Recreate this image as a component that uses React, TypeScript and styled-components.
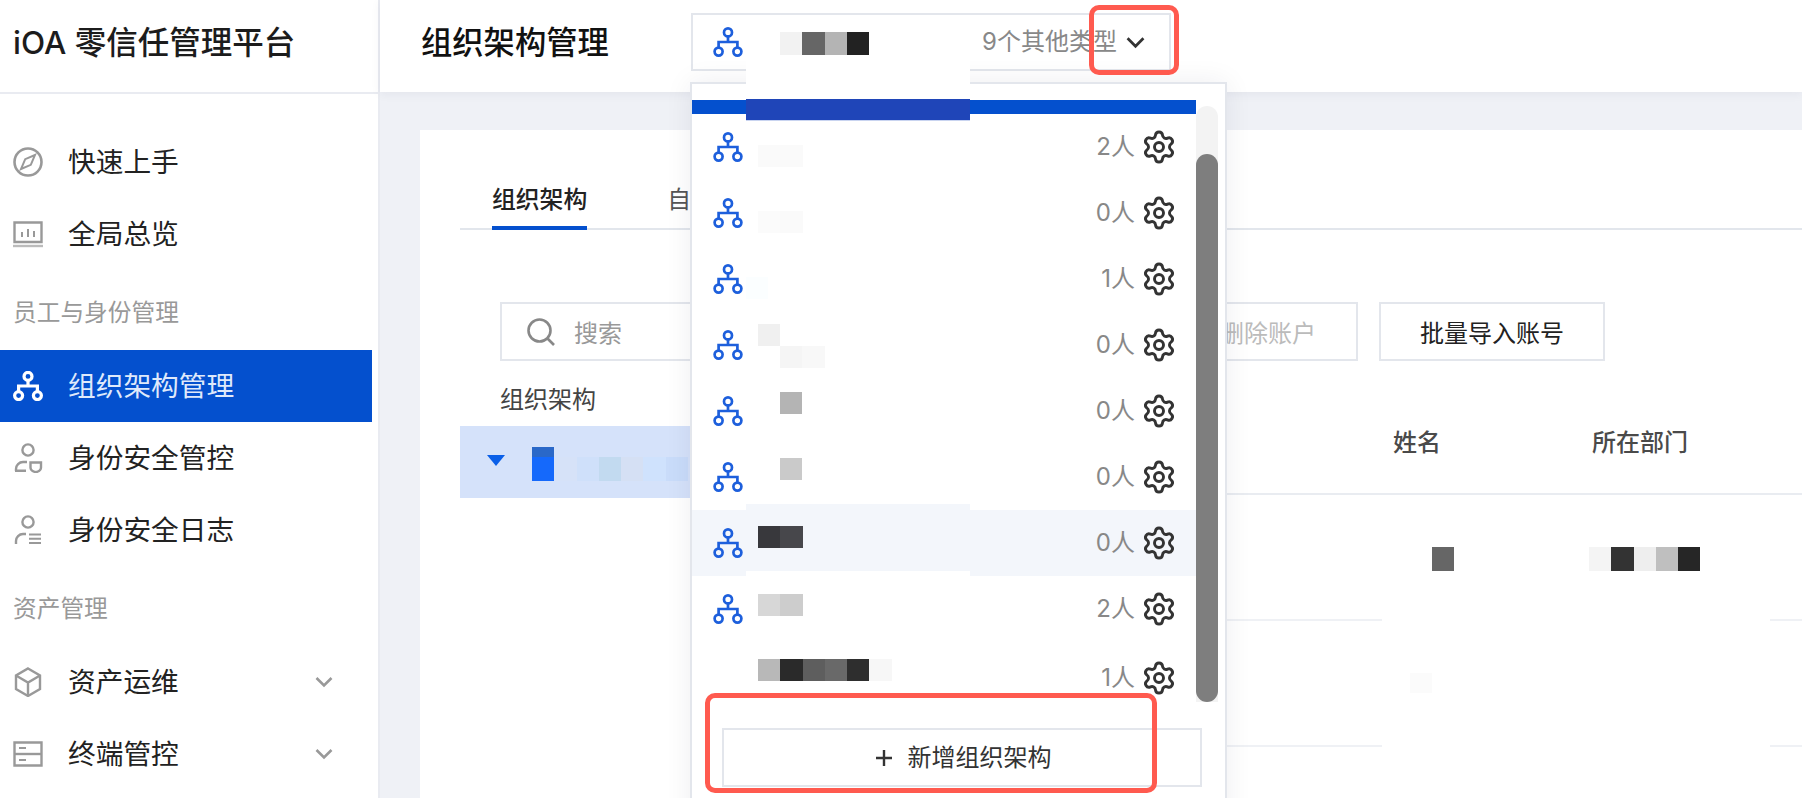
import * as React from 'react';
import styled, { createGlobalStyle } from 'styled-components';
import { Settings } from 'lucide-react';

const GlobalStyle = createGlobalStyle`
	html, body {
		margin: 0;
		padding: 0;
		background: #fff;
	}
	* {
		box-sizing: border-box;
	}
	body {
		font-family: Inter, 'Noto Sans CJK SC', sans-serif;
		color: #222;
	}
`;

const Page = styled.div`
	position: relative;
	display: flex;
	width: 1802px;
	height: 798px;
	overflow: hidden;
`;

/* ---------- sidebar ---------- */

const Sidebar = styled.aside`
	flex: 0 0 380px;
	border-right: 2px solid #e9ebf1;
	background: #fff;
`;

const Logo = styled.div`
	display: flex;
	align-items: center;
	height: 94px;
	padding: 0 0 6px 13px;
	border-bottom: 2px solid #e9ebf1;
	font-size: 31.5px;
	font-weight: 500;
	line-height: 40px;
	color: #1c1c1c;
	white-space: nowrap;
`;

const Nav = styled.nav`
	padding-top: 32px;
`;

const NavItem = styled.div<{ $active?: boolean }>`
	display: flex;
	align-items: center;
	gap: 25px;
	width: 372px;
	height: 72px;
	padding: 0 39px 0 13px;
	font-size: 27.7px;
	line-height: 36px;
	background: ${(p) => (p.$active ? '#0450ce' : 'transparent')};
	color: ${(p) => (p.$active ? '#dfe9fb' : '#222')};

	svg {
		flex: none;
	}
`;

const NavLabel = styled.span`
	flex: 1;
`;

const NavGroup = styled.div`
	height: 80px;
	padding: 27px 0 0 13px;
	font-size: 23.7px;
	line-height: 32px;
	color: #999;
`;

/* ---------- main ---------- */

const Main = styled.div`
	flex: 1;
	display: flex;
	flex-direction: column;
	min-width: 0;
`;

const Header = styled.header`
	position: relative;
	z-index: 2;
	display: flex;
	flex: 0 0 92px;
	padding-left: 41px;
	background: #fff;
	box-shadow: 0 2px 10px rgba(30, 40, 70, 0.06);
`;

const Title = styled.h1`
	width: 270px;
	margin: 0;
	font-size: 31.3px;
	font-weight: 500;
	line-height: 86px;
	color: #111;
`;

const Trigger = styled.div`
	display: flex;
	align-items: center;
	width: 480px;
	height: 58px;
	margin-top: 13px;
	padding: 0 24px 0 20px;
	border: 2px solid #e3e6ec;
`;

const TriggerHint = styled.span`
	margin: 0 9px 0 auto;
	font-size: 24px;
	line-height: 32px;
	color: #888;
`;

const Content = styled.div`
	flex: 1;
	display: flex;
	padding: 38px 0 0 40px;
	background: #eff1f6;
`;

const Card = styled.section`
	flex: 1;
	min-width: 0;
	background: #fff;
`;

const Tabs = styled.div`
	display: flex;
	align-items: flex-end;
	gap: 80px;
	height: 100px;
	margin-left: 40px;
	padding-left: 32px;
	border-bottom: 2px solid #e2e6ec;
`;

const Tab = styled.div<{ $active?: boolean }>`
	position: relative;
	height: 50px;
	margin-bottom: -2px;
	font-size: 23.8px;
	font-weight: ${(p) => (p.$active ? 500 : 400)};
	line-height: 40px;
	color: ${(p) => (p.$active ? '#222' : '#555')};
	border-bottom: 4px solid ${(p) => (p.$active ? '#0450ce' : 'transparent')};
	white-space: nowrap;
`;

const Toolbar = styled.div`
	display: flex;
	justify-content: space-between;
	width: 1105px;
	margin: 72px 0 0 80px;
`;

const SearchBox = styled.div`
	display: flex;
	align-items: center;
	gap: 19px;
	width: 500px;
	height: 59px;
	padding-left: 25px;
	border: 2px solid #e3e6ec;
	font-size: 24px;
	color: #999;
`;

const ToolButtons = styled.div`
	display: flex;
	gap: 21px;
`;

const ToolButton = styled.div<{ $disabled?: boolean; $w: number }>`
	display: flex;
	align-items: center;
	justify-content: center;
	width: ${(p) => p.$w}px;
	height: 59px;
	border: 2px solid #e3e6ec;
	font-size: 24px;
	color: ${(p) => (p.$disabled ? '#bbb' : '#222')};
`;

const Body = styled.div`
	display: flex;
`;

const TreeColumn = styled.div`
	flex: 0 0 300px;
	margin-left: 40px;
`;

const TreeTitle = styled.div`
	height: 65px;
	padding: 23px 0 0 40px;
	font-size: 24px;
	line-height: 32px;
	color: #444;
`;

const TreeRow = styled.div`
	display: flex;
	align-items: flex-start;
	height: 72px;
	padding: 21px 0 0 27px;
	background: #d5e2fa;
`;

const Caret = styled.span`
	width: 0;
	height: 0;
	margin: 8px 27px 0 0;
	border-style: solid;
	border-width: 11px 9px 0;
	border-color: #0a5fe8 transparent transparent;
`;

const TreeName = styled.div`
	display: flex;
	flex-direction: column;
`;

const Table = styled.div`
	flex: 1;
	margin-top: 32px;
`;

const TableRow = styled.div<{ $head?: boolean; $masked?: boolean }>`
	position: relative;
	display: grid;
	grid-template-columns: 633px 199px 1fr;
	align-items: center;
	height: ${(p) => (p.$head ? '102px' : '126px')};
	border-bottom: 2px solid ${(p) => (p.$head ? '#e9ecf1' : '#eff1f5')};

	${(p) =>
		p.$masked &&
		`&::after {
			content: '';
			position: absolute;
			left: 622px;
			bottom: -3px;
			width: 388px;
			height: 5px;
			background: #fff;
		}`}
`;

const HeadCell = styled.div`
	font-size: 24px;
	font-weight: 500;
	line-height: 32px;
	color: #4a4a4a;
`;

/* ---------- blurred names ---------- */

const Mosaic = styled.div<{ $x?: number; $y?: number }>`
	display: flex;
	margin: ${(p) => p.$y ?? 0}px 0 0 ${(p) => p.$x ?? 0}px;
`;

const Pixel = styled.span<{ $color: string; $h?: number }>`
	flex: none;
	width: 22.3px;
	height: ${(p) => p.$h ?? 23}px;
	background: ${(p) => p.$color};
`;

const Pixels = ({ colors, x, y, h }: { colors: string[]; x?: number; y?: number; h?: number }) => (
	<Mosaic $x={x} $y={y}>
		{colors.map((c, i) => (
			<Pixel key={i} $color={c} $h={h} />
		))}
	</Mosaic>
);

/* ---------- dropdown ---------- */

const Panel = styled.div`
	position: absolute;
	z-index: 5;
	left: 690px;
	top: 82px;
	width: 537px;
	height: 760px;
	padding-top: 16px;
	border: 2px solid #e3e6ec;
	background: #fff;
	box-shadow: 0 0 26px rgba(20, 30, 60, 0.07);
`;

const PanelBody = styled.div`
	display: flex;
	align-items: flex-start;
`;

const List = styled.div`
	width: 504px;
`;

const SelectedBar = styled.div`
	height: 14px;
	background: #0450ce;
`;

const Row = styled.div<{ $hover?: boolean; $shift?: number }>`
	position: relative;
	display: flex;
	align-items: center;
	height: 66px;
	margin-top: ${(p) => p.$shift ?? 0}px;
	padding: 0 19px 0 21px;
	background: ${(p) => (p.$hover ? '#f3f6fb' : 'transparent')};

	${(p) =>
		p.$hover &&
		`&::before {
			content: '';
			position: absolute;
			left: 54px;
			top: -6px;
			width: 224px;
			height: 6px;
			background: #f3f6fb;
		}
		&::after {
			content: '';
			position: absolute;
			left: 54px;
			bottom: 0;
			width: 224px;
			height: 5px;
			background: #fff;
		}`}
`;

const OrgSlot = styled.span<{ $hidden?: boolean }>`
	flex: none;
	display: flex;
	visibility: ${(p) => (p.$hidden ? 'hidden' : 'visible')};
`;

const NameSlot = styled.div`
	position: relative;
	z-index: 1;
	flex: 1;
	align-self: flex-start;
	display: flex;
	flex-direction: column;
`;

const Count = styled.span`
	position: relative;
	z-index: 1;
	font-size: 24px;
	line-height: 32px;
	color: #888;
`;

const GearIcon = styled(Settings)`
	position: relative;
	z-index: 1;
	flex: none;
	margin-left: 6px;
	color: #333;
`;

const ScrollTrack = styled.div`
	flex: none;
	width: 22px;
	height: 596px;
	margin-top: 6px;
	border-radius: 11px 11px 0 0;
	background: #f3f3f3;
`;

const ScrollThumb = styled.div`
	height: 548px;
	margin-top: 48px;
	border-radius: 11px;
	background: #7e7e7e;
`;

const AddButton = styled.div`
	display: flex;
	align-items: center;
	justify-content: center;
	gap: 15px;
	width: 480px;
	height: 59px;
	margin: 17px 0 0 30px;
	padding-left: 2px;
	border: 2px solid #e3e6ec;
	font-size: 24px;
	line-height: 32px;
	color: #333;
`;

/* ---------- overlays on top of the shot ---------- */

const RedactPatch = styled.div`
	position: absolute;
	z-index: 6;
	left: 746px;
	top: 55px;
	width: 224px;
	height: 66px;
	background: linear-gradient(#fff 0, #fff 44px, #1f45b8 44px, #1f45b8 65px, #c9d4f0 65px);
`;

const Callout = styled.div<{ $x: number; $y: number; $w: number; $h: number }>`
	position: absolute;
	z-index: 7;
	left: ${(p) => p.$x}px;
	top: ${(p) => p.$y}px;
	width: ${(p) => p.$w}px;
	height: ${(p) => p.$h}px;
	border: 5px solid #ff5a4f;
	border-radius: 10px;
`;

/* ---------- icons ---------- */

const OrgIcon = ({ color = '#1d5fdc', width = 2.7 }: { color?: string; width?: number }) => (
	<svg width="30" height="30" viewBox="0 0 30 30" fill="none" stroke={color} strokeWidth={width}>
		<circle cx="15" cy="5.4" r="4" />
		<circle cx="5.6" cy="24.6" r="4" />
		<circle cx="24.4" cy="24.6" r="4" />
		<path d="M15 9.4V15M5.6 20.6V15H24.4V20.6" />
	</svg>
);

const NavIcon = ({ children }: { children: React.ReactNode }) => (
	<svg width="30" height="30" viewBox="0 0 30 30" fill="none" stroke="#999" strokeWidth="2.4">
		{children}
	</svg>
);

const Chevron = ({ color = '#999', size = 18 }: { color?: string; size?: number }) => (
	<svg width={size} height={size} viewBox="0 0 18 18" fill="none" stroke={color} strokeWidth="2.6">
		<path d="M1.5 5L9 12.5L16.5 5" />
	</svg>
);

const SearchIcon = () => (
	<svg width="28" height="28" viewBox="0 0 28 28" fill="none" stroke="#888" strokeWidth="2.6">
		<circle cx="12.5" cy="12.5" r="11" />
		<path d="M20.5 20.5L27 27" />
	</svg>
);

const rows = [
	{ count: '2人', marks: [{ x: 15, y: 31, colors: ['#fafafa', '#fafafa'] }] },
	{ count: '0人', marks: [{ x: 15, y: 31, colors: ['#fbfbfb', '#fafafa'] }] },
	{ count: '1人', marks: [{ x: 3, y: 31, colors: ['#fbfeff'] }] },
	{
		count: '0人',
		marks: [
			{ x: 15, y: 12, colors: ['#f0f0f0'] },
			{ x: 37, y: 0, colors: ['#f5f5f5', '#f8f8f8'] },
		],
	},
	{ count: '0人', marks: [{ x: 37, y: 14, colors: ['#b4b4b4'] }] },
	{ count: '0人', marks: [{ x: 37, y: 14, colors: ['#cacaca'] }] },
	{ count: '0人', hover: true, marks: [{ x: 15, y: 16, colors: ['#38383c', '#47474b'] }] },
	{ count: '2人', marks: [{ x: 15, y: 18, colors: ['#d7d7d7', '#cdcdcd'] }] },
	{
		count: '1人',
		noIcon: true,
		shift: 3,
		marks: [{ x: 15, y: 14, colors: ['#b8b8b8', '#2a2a2a', '#5e5e5e', '#696969', '#2e2e2e', '#f7f7f7'] }],
	},
];

const App: React.FC = () => {
	return (
		<Page>
			<GlobalStyle />
			<Sidebar>
				<Logo>iOA 零信任管理平台</Logo>
				<Nav>
					<NavItem>
						<NavIcon>
							<circle cx="15" cy="15" r="13.5" strokeWidth="2.6" />
							<path d="M22 8L12.2 12.2L8 22L17.8 17.8Z" strokeWidth="2" />
						</NavIcon>
						<NavLabel>快速上手</NavLabel>
					</NavItem>
					<NavItem>
						<NavIcon>
							<path d="M1.5 3.5H28.5V23H1.5Z" />
							<path d="M0 27H30" stroke="#bbb" />
							<path d="M9 18V13M15 18V10M21 18V12" strokeWidth="2" />
						</NavIcon>
						<NavLabel>全局总览</NavLabel>
					</NavItem>
					<NavGroup>员工与身份管理</NavGroup>
					<NavItem $active>
						<OrgIcon color="#fff" width={3.2} />
						<NavLabel>组织架构管理</NavLabel>
					</NavItem>
					<NavItem>
						<NavIcon>
							<circle cx="15" cy="7" r="5.6" />
							<path d="M3 28V26A7 7 0 0 1 10 19H14M2 27.8H13" />
							<path d="M17.5 19.5H28V24.5C28 27 25.5 28.6 22.8 29.2C20 28.6 17.5 27 17.5 24.5Z" />
						</NavIcon>
						<NavLabel>身份安全管控</NavLabel>
					</NavItem>
					<NavItem>
						<NavIcon>
							<circle cx="15" cy="7" r="5.6" />
							<path d="M3 29V26A7 7 0 0 1 10 19H13" />
							<path d="M16 19.5H28M16 23.8H28M16 28H28" strokeWidth="2" />
						</NavIcon>
						<NavLabel>身份安全日志</NavLabel>
					</NavItem>
					<NavGroup>资产管理</NavGroup>
					<NavItem>
						<NavIcon>
							<path d="M15 1.5L27 8.5V22L15 29L3 22V8.5Z" />
							<path d="M3 8.5L15 15.5L27 8.5M15 15.5V29" />
						</NavIcon>
						<NavLabel>资产运维</NavLabel>
						<Chevron />
					</NavItem>
					<NavItem>
						<NavIcon>
							<path d="M1.5 3.5H28.5V26.5H1.5Z" />
							<path d="M1.5 15H28.5" />
							<path d="M6 9H13M6 21H13" strokeWidth="2" />
						</NavIcon>
						<NavLabel>终端管控</NavLabel>
						<Chevron />
					</NavItem>
				</Nav>
			</Sidebar>

			<Main>
				<Header>
					<Title>组织架构管理</Title>
					<Trigger>
						<OrgSlot>
							<OrgIcon />
						</OrgSlot>
						<Pixels x={37} y={2} colors={['#f2f2f2', '#666', '#b4b4b4', '#222']} />
						<TriggerHint>9个其他类型</TriggerHint>
						<Chevron color="#333" size={19} />
					</Trigger>
				</Header>
				<Content>
					<Card>
						<Tabs>
							<Tab $active>组织架构</Tab>
							<Tab>自定义字段</Tab>
						</Tabs>
						<Toolbar>
							<SearchBox>
								<SearchIcon />
								搜索
							</SearchBox>
							<ToolButtons>
								<ToolButton $disabled $w={180}>
									删除账户
								</ToolButton>
								<ToolButton $w={226}>批量导入账号</ToolButton>
							</ToolButtons>
						</Toolbar>
						<Body>
							<TreeColumn>
								<TreeTitle>组织架构</TreeTitle>
								<TreeRow>
									<Caret />
									<TreeName>
										<Pixel $color="#2a68c8" $h={10} />
										<Pixel $color="#1569fb" $h={24} />
									</TreeName>
									<Pixels
										y={10}
										h={24}
										colors={['#d6e2f8', '#cfe0fa', '#c2daf0', '#d5e0f4', '#cfe2fd', '#c9dcfa']}
									/>
								</TreeRow>
							</TreeColumn>
							<Table>
								<TableRow $head>
									<span />
									<HeadCell>姓名</HeadCell>
									<HeadCell>所在部门</HeadCell>
								</TableRow>
								<TableRow $masked>
									<span />
									<Pixels x={39} y={4} h={24} colors={['#666']} />
									<Pixels x={-3} y={4} h={24} colors={['#f4f4f4', '#333', '#eee', '#bfbfbf', '#262626']} />
								</TableRow>
								<TableRow $masked>
									<span />
									<Pixels x={17} h={20} colors={['#fbfbfb']} />
									<span />
								</TableRow>
							</Table>
						</Body>
					</Card>
				</Content>
			</Main>

			<Panel>
				<PanelBody>
					<List>
						<SelectedBar />
						{rows.map((row, i) => (
							<Row key={i} $hover={row.hover} $shift={row.shift}>
								<OrgSlot $hidden={row.noIcon}>
									<OrgIcon />
								</OrgSlot>
								<NameSlot>
									{row.marks.map((m, j) => (
										<Pixels key={j} x={m.x} y={m.y} colors={m.colors} h={22} />
									))}
								</NameSlot>
								<Count>{row.count}</Count>
								<GearIcon size={36} strokeWidth={1.95} />
							</Row>
						))}
					</List>
					<ScrollTrack>
						<ScrollThumb />
					</ScrollTrack>
				</PanelBody>
				<AddButton>
					<svg width="18" height="18" viewBox="0 0 18 18" fill="none" stroke="#333" strokeWidth="2.4">
						<path d="M9 1V17M1 9H17" />
					</svg>
					新增组织架构
				</AddButton>
			</Panel>

			<RedactPatch />
			<Callout $x={1089} $y={5} $w={90} $h={70} />
			<Callout $x={705} $y={693} $w={452} $h={100} />
		</Page>
	);
};

export default App;
